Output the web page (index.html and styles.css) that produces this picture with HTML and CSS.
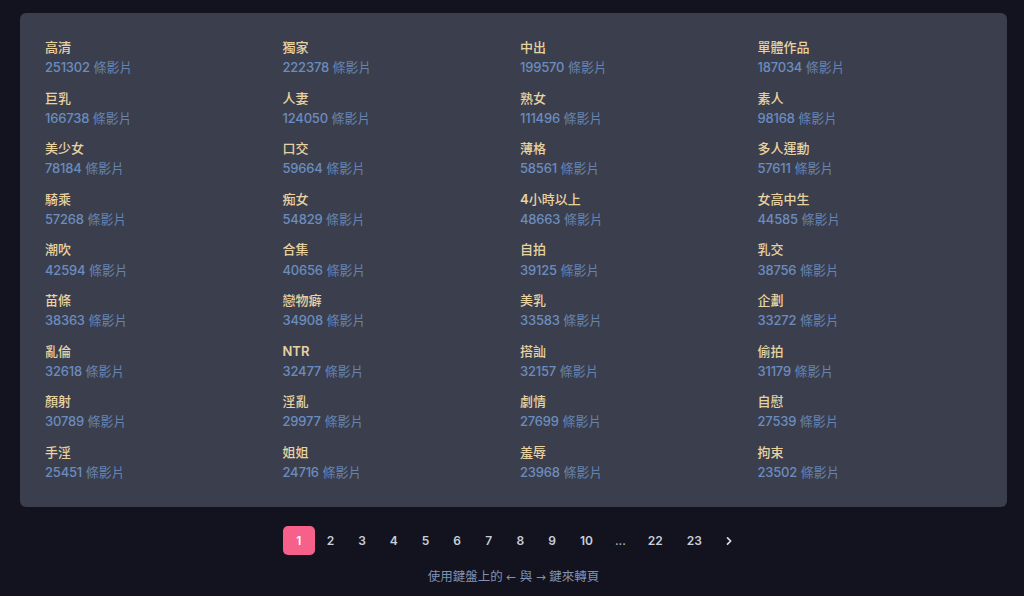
FILE: index.html
```html
<!DOCTYPE html>
<html lang="zh-Hant">
<head>
<meta charset="utf-8">
<title>類別</title>
<link rel="stylesheet" href="styles.css">
</head>
<body>
<main class="page">
  <section class="card">
    <ul class="grid">
      <li class="item"><a class="name">高清</a><span class="count"><b>251302</b> 條影片</span></li>
      <li class="item"><a class="name">獨家</a><span class="count"><b>222378</b> 條影片</span></li>
      <li class="item"><a class="name">中出</a><span class="count"><b>199570</b> 條影片</span></li>
      <li class="item"><a class="name">單體作品</a><span class="count"><b>187034</b> 條影片</span></li>
      <li class="item"><a class="name">巨乳</a><span class="count"><b>166738</b> 條影片</span></li>
      <li class="item"><a class="name">人妻</a><span class="count"><b>124050</b> 條影片</span></li>
      <li class="item"><a class="name">熟女</a><span class="count"><b>111496</b> 條影片</span></li>
      <li class="item"><a class="name">素人</a><span class="count"><b>98168</b> 條影片</span></li>
      <li class="item"><a class="name">美少女</a><span class="count"><b>78184</b> 條影片</span></li>
      <li class="item"><a class="name">口交</a><span class="count"><b>59664</b> 條影片</span></li>
      <li class="item"><a class="name">薄格</a><span class="count"><b>58561</b> 條影片</span></li>
      <li class="item"><a class="name">多人運動</a><span class="count"><b>57611</b> 條影片</span></li>
      <li class="item"><a class="name">騎乘</a><span class="count"><b>57268</b> 條影片</span></li>
      <li class="item"><a class="name">痴女</a><span class="count"><b>54829</b> 條影片</span></li>
      <li class="item"><a class="name"><span class="lat">4</span>小時以上</a><span class="count"><b>48663</b> 條影片</span></li>
      <li class="item"><a class="name">女高中生</a><span class="count"><b>44585</b> 條影片</span></li>
      <li class="item"><a class="name">潮吹</a><span class="count"><b>42594</b> 條影片</span></li>
      <li class="item"><a class="name">合集</a><span class="count"><b>40656</b> 條影片</span></li>
      <li class="item"><a class="name">自拍</a><span class="count"><b>39125</b> 條影片</span></li>
      <li class="item"><a class="name">乳交</a><span class="count"><b>38756</b> 條影片</span></li>
      <li class="item"><a class="name">苗條</a><span class="count"><b>38363</b> 條影片</span></li>
      <li class="item"><a class="name">戀物癖</a><span class="count"><b>34908</b> 條影片</span></li>
      <li class="item"><a class="name">美乳</a><span class="count"><b>33583</b> 條影片</span></li>
      <li class="item"><a class="name">企劃</a><span class="count"><b>33272</b> 條影片</span></li>
      <li class="item"><a class="name">亂倫</a><span class="count"><b>32618</b> 條影片</span></li>
      <li class="item"><a class="name"><span class="lat">NTR</span></a><span class="count"><b>32477</b> 條影片</span></li>
      <li class="item"><a class="name">搭訕</a><span class="count"><b>32157</b> 條影片</span></li>
      <li class="item"><a class="name">偷拍</a><span class="count"><b>31179</b> 條影片</span></li>
      <li class="item"><a class="name">顏射</a><span class="count"><b>30789</b> 條影片</span></li>
      <li class="item"><a class="name">淫亂</a><span class="count"><b>29977</b> 條影片</span></li>
      <li class="item"><a class="name">劇情</a><span class="count"><b>27699</b> 條影片</span></li>
      <li class="item"><a class="name">自慰</a><span class="count"><b>27539</b> 條影片</span></li>
      <li class="item"><a class="name">手淫</a><span class="count"><b>25451</b> 條影片</span></li>
      <li class="item"><a class="name">姐姐</a><span class="count"><b>24716</b> 條影片</span></li>
      <li class="item"><a class="name">羞辱</a><span class="count"><b>23968</b> 條影片</span></li>
      <li class="item"><a class="name">拘束</a><span class="count"><b>23502</b> 條影片</span></li>
    </ul>
  </section>
  <nav class="pager">
    <a class="pg active">1</a>
    <a class="pg">2</a>
    <a class="pg">3</a>
    <a class="pg">4</a>
    <a class="pg">5</a>
    <a class="pg">6</a>
    <a class="pg">7</a>
    <a class="pg">8</a>
    <a class="pg">9</a>
    <a class="pg">10</a>
    <span class="pg dots">...</span>
    <a class="pg">22</a>
    <a class="pg">23</a>
    <a class="pg next"><svg width="10" height="10" viewBox="0 0 10 10"><path d="M3.5 1.8 L6.7 5 L3.5 8.2" fill="none" stroke="currentColor" stroke-width="1.7" stroke-linecap="round" stroke-linejoin="round"/></svg></a>
  </nav>
  <p class="hint">使用鍵盤上的 <span class="arrow">←</span> 與 <span class="arrow">→</span> 鍵來轉頁</p>
</main>
</body>
</html>
```

FILE: styles.css
```css
html, body {
  margin: 0;
  padding: 0;
  background: #12131e;
}
body {
  font-family: Inter, "Noto Sans CJK TC", "Noto Sans", sans-serif;
  -webkit-font-smoothing: antialiased;
}
.page {
  padding: 13px 17px 0 20px;
}
.card {
  background: #3b3f4d;
  border-radius: 6px;
  padding: 24px 24px 25px 25px;
}
.grid {
  list-style: none;
  margin: 0;
  padding: 0;
  display: grid;
  grid-template-columns: repeat(4, 1fr);
  column-gap: 12px;
  row-gap: 10px;
}
.item {
  display: flex;
  flex-direction: column;
  align-items: flex-start;
}
.name {
  font-size: 13px;
  line-height: 20.3px;
  font-weight: 500;
  color: #e8d2a0;
}
.name .lat {
  font-weight: 600;
}
.count {
  font-size: 13px;
  line-height: 20.3px;
  color: #6584b3;
  font-weight: 400;
}
.count b {
  font-weight: 500;
  color: #6b8cbf;
  letter-spacing: -0.2px;
}
.pager {
  display: flex;
  justify-content: center;
  align-items: center;
  margin-top: 19px;
  height: 29px;
}
.pg {
  display: flex;
  align-items: center;
  justify-content: center;
  height: 29px;
  padding: 0 12px;
  min-width: 7.5px;
  font-size: 12px;
  font-weight: 600;
  color: #c9ceda;
  border-radius: 5px;
}
.pg.active {
  background: #f7608a;
  color: #fff;
  width: 7px;
}
.pg.dots {
  padding: 0 10px;
  font-weight: 500;
  color: #a9afbd;
}
.pg.next {
  padding: 0 10px;
  color: #d7dbe4;
}
.hint {
  margin: 13px 0 0;
  text-align: center;
  font-size: 12.5px;
  line-height: 18px;
  color: #8291b0;
}
.hint .arrow {
  font-family: "DejaVu Sans", sans-serif;
  font-size: 12px;
}
```
